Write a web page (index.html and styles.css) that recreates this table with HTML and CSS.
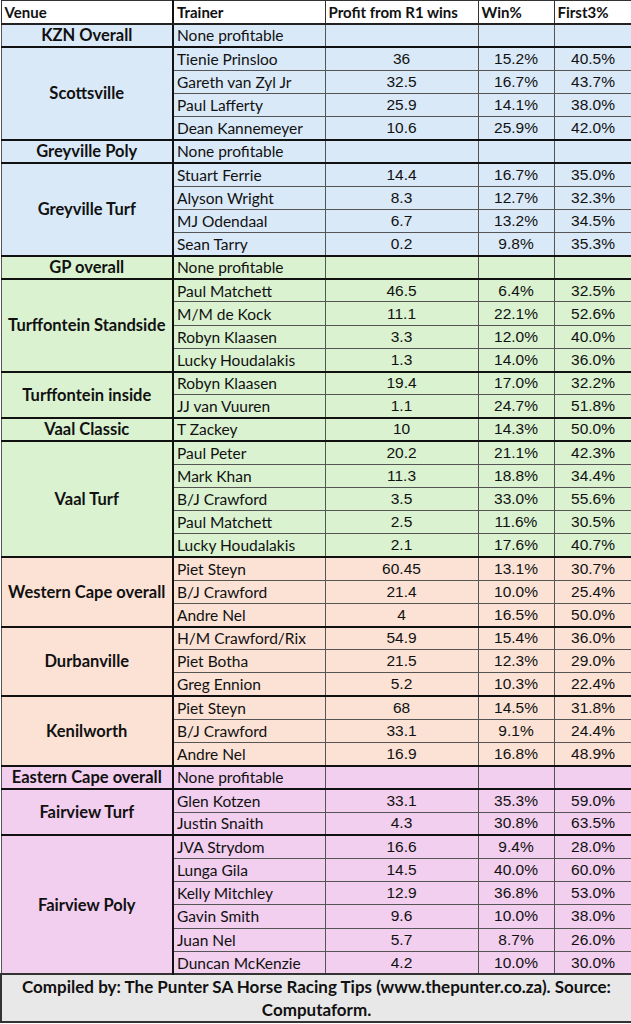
FILE: index.html
```html
<!DOCTYPE html>
<html>
<head>
<meta charset="utf-8">
<link rel="stylesheet" href="styles.css">
</head>
<body>
<table class="sheet">
<colgroup>
<col class="c1"><col class="c2"><col class="c3"><col class="c4"><col class="c5">
</colgroup>
<thead>
<tr class="head"><th class="venue-h">Venue</th><th>Trainer</th><th>Profit from R1 wins</th><th>Win%</th><th>First3%</th></tr>
</thead>
<tbody class="blue">
<tr class="g"><td class="venue">KZN Overall</td><td class="tr">None profitable</td><td></td><td></td><td></td></tr>
<tr class="g"><td class="venue" rowspan="4">Scottsville</td><td class="tr">Tienie Prinsloo</td><td class="n">36</td><td class="n">15.2%</td><td class="n">40.5%</td></tr>
<tr><td class="tr">Gareth van Zyl Jr</td><td class="n">32.5</td><td class="n">16.7%</td><td class="n">43.7%</td></tr>
<tr><td class="tr">Paul Lafferty</td><td class="n">25.9</td><td class="n">14.1%</td><td class="n">38.0%</td></tr>
<tr><td class="tr">Dean Kannemeyer</td><td class="n">10.6</td><td class="n">25.9%</td><td class="n">42.0%</td></tr>
<tr class="g"><td class="venue">Greyville Poly</td><td class="tr">None profitable</td><td></td><td></td><td></td></tr>
<tr class="g"><td class="venue" rowspan="4">Greyville Turf</td><td class="tr">Stuart Ferrie</td><td class="n">14.4</td><td class="n">16.7%</td><td class="n">35.0%</td></tr>
<tr><td class="tr">Alyson Wright</td><td class="n">8.3</td><td class="n">12.7%</td><td class="n">32.3%</td></tr>
<tr><td class="tr">MJ Odendaal</td><td class="n">6.7</td><td class="n">13.2%</td><td class="n">34.5%</td></tr>
<tr><td class="tr">Sean Tarry</td><td class="n">0.2</td><td class="n">9.8%</td><td class="n">35.3%</td></tr>
</tbody>
<tbody class="green">
<tr class="g"><td class="venue">GP overall</td><td class="tr">None profitable</td><td></td><td></td><td></td></tr>
<tr class="g"><td class="venue" rowspan="4">Turffontein Standside</td><td class="tr">Paul Matchett</td><td class="n">46.5</td><td class="n">6.4%</td><td class="n">32.5%</td></tr>
<tr><td class="tr">M/M de Kock</td><td class="n">11.1</td><td class="n">22.1%</td><td class="n">52.6%</td></tr>
<tr><td class="tr">Robyn Klaasen</td><td class="n">3.3</td><td class="n">12.0%</td><td class="n">40.0%</td></tr>
<tr><td class="tr">Lucky Houdalakis</td><td class="n">1.3</td><td class="n">14.0%</td><td class="n">36.0%</td></tr>
<tr class="g"><td class="venue" rowspan="2">Turffontein inside</td><td class="tr">Robyn Klaasen</td><td class="n">19.4</td><td class="n">17.0%</td><td class="n">32.2%</td></tr>
<tr><td class="tr">JJ van Vuuren</td><td class="n">1.1</td><td class="n">24.7%</td><td class="n">51.8%</td></tr>
<tr class="g"><td class="venue">Vaal Classic</td><td class="tr">T Zackey</td><td class="n">10</td><td class="n">14.3%</td><td class="n">50.0%</td></tr>
<tr class="g"><td class="venue" rowspan="5">Vaal Turf</td><td class="tr">Paul Peter</td><td class="n">20.2</td><td class="n">21.1%</td><td class="n">42.3%</td></tr>
<tr><td class="tr">Mark Khan</td><td class="n">11.3</td><td class="n">18.8%</td><td class="n">34.4%</td></tr>
<tr><td class="tr">B/J Crawford</td><td class="n">3.5</td><td class="n">33.0%</td><td class="n">55.6%</td></tr>
<tr><td class="tr">Paul Matchett</td><td class="n">2.5</td><td class="n">11.6%</td><td class="n">30.5%</td></tr>
<tr><td class="tr">Lucky Houdalakis</td><td class="n">2.1</td><td class="n">17.6%</td><td class="n">40.7%</td></tr>
</tbody>
<tbody class="peach">
<tr class="g"><td class="venue" rowspan="3">Western Cape overall</td><td class="tr">Piet Steyn</td><td class="n">60.45</td><td class="n">13.1%</td><td class="n">30.7%</td></tr>
<tr><td class="tr">B/J Crawford</td><td class="n">21.4</td><td class="n">10.0%</td><td class="n">25.4%</td></tr>
<tr><td class="tr">Andre Nel</td><td class="n">4</td><td class="n">16.5%</td><td class="n">50.0%</td></tr>
<tr class="g"><td class="venue" rowspan="3">Durbanville</td><td class="tr">H/M Crawford/Rix</td><td class="n">54.9</td><td class="n">15.4%</td><td class="n">36.0%</td></tr>
<tr><td class="tr">Piet Botha</td><td class="n">21.5</td><td class="n">12.3%</td><td class="n">29.0%</td></tr>
<tr><td class="tr">Greg Ennion</td><td class="n">5.2</td><td class="n">10.3%</td><td class="n">22.4%</td></tr>
<tr class="g"><td class="venue" rowspan="3">Kenilworth</td><td class="tr">Piet Steyn</td><td class="n">68</td><td class="n">14.5%</td><td class="n">31.8%</td></tr>
<tr><td class="tr">B/J Crawford</td><td class="n">33.1</td><td class="n">9.1%</td><td class="n">24.4%</td></tr>
<tr><td class="tr">Andre Nel</td><td class="n">16.9</td><td class="n">16.8%</td><td class="n">48.9%</td></tr>
</tbody>
<tbody class="pink">
<tr class="g"><td class="venue">Eastern Cape overall</td><td class="tr">None profitable</td><td></td><td></td><td></td></tr>
<tr class="g"><td class="venue" rowspan="2">Fairview Turf</td><td class="tr">Glen Kotzen</td><td class="n">33.1</td><td class="n">35.3%</td><td class="n">59.0%</td></tr>
<tr><td class="tr">Justin Snaith</td><td class="n">4.3</td><td class="n">30.8%</td><td class="n">63.5%</td></tr>
<tr class="g"><td class="venue" rowspan="6">Fairview Poly</td><td class="tr">JVA Strydom</td><td class="n">16.6</td><td class="n">9.4%</td><td class="n">28.0%</td></tr>
<tr><td class="tr">Lunga Gila</td><td class="n">14.5</td><td class="n">40.0%</td><td class="n">60.0%</td></tr>
<tr><td class="tr">Kelly Mitchley</td><td class="n">12.9</td><td class="n">36.8%</td><td class="n">53.0%</td></tr>
<tr><td class="tr">Gavin Smith</td><td class="n">9.6</td><td class="n">10.0%</td><td class="n">38.0%</td></tr>
<tr><td class="tr">Juan Nel</td><td class="n">5.7</td><td class="n">8.7%</td><td class="n">26.0%</td></tr>
<tr><td class="tr">Duncan McKenzie</td><td class="n">4.2</td><td class="n">10.0%</td><td class="n">30.0%</td></tr>
</tbody>
<tfoot>
<tr class="foot"><td colspan="5">Compiled by: The Punter SA Horse Racing Tips (www.thepunter.co.za). Source: Computaform.</td></tr>
</tfoot>
</table>
</body>
</html>
```
FILE: styles.css
```css
html, body {
  margin: 0;
  padding: 0;
  background: #ffffff;
}
.sheet {
  width: 631px;
  border-collapse: collapse;
  table-layout: fixed;
  font-family: Lato, "Liberation Sans", sans-serif;
  font-size: 15.5px;
  color: #111;
}
.c1 { width: 172px; }
.c2 { width: 152px; }
.c3 { width: 153px; }
.c4 { width: 76px; }
.c5 { width: 78px; }
.sheet th, .sheet td {
  height: 23.2px;
  padding: 0 3px;
  box-sizing: border-box;
  border: 1px solid #555;
  border-top: 1px solid #9a9a9a;
  white-space: nowrap;
  overflow: hidden;
  line-height: 20px;
}
.sheet th {
  font-weight: 700;
  font-size: 15px;
  text-align: left;
  background: #fff;
  border: 1px solid #333;
  border-bottom: 2px solid #222;
}
.sheet td.venue {
  font-weight: 700;
  font-size: 16.5px;
  text-align: center;
  border-right: 2px solid #111;
  padding: 0 2px;
}
.sheet th.venue-h {
  border-right: 2px solid #111;
}
.sheet tr.g td {
  border-top: 2px solid #111;
}
.sheet td.n {
  font-family: "Liberation Sans", Arial, sans-serif;
  font-size: 15.5px;
  text-align: center;
}
.blue td { background: #dae9f8; }
.green td { background: #daf2d0; }
.peach td { background: #fbe2d5; }
.pink td { background: #f2ceef; }
.foot td {
  background: #e8e8e8;
  font-weight: 700;
  text-align: center;
  white-space: normal;
  height: 47px;
  line-height: 23px;
  padding: 0 2px;
  border: 2px solid #333;
  font-size: 17px;
}
```
